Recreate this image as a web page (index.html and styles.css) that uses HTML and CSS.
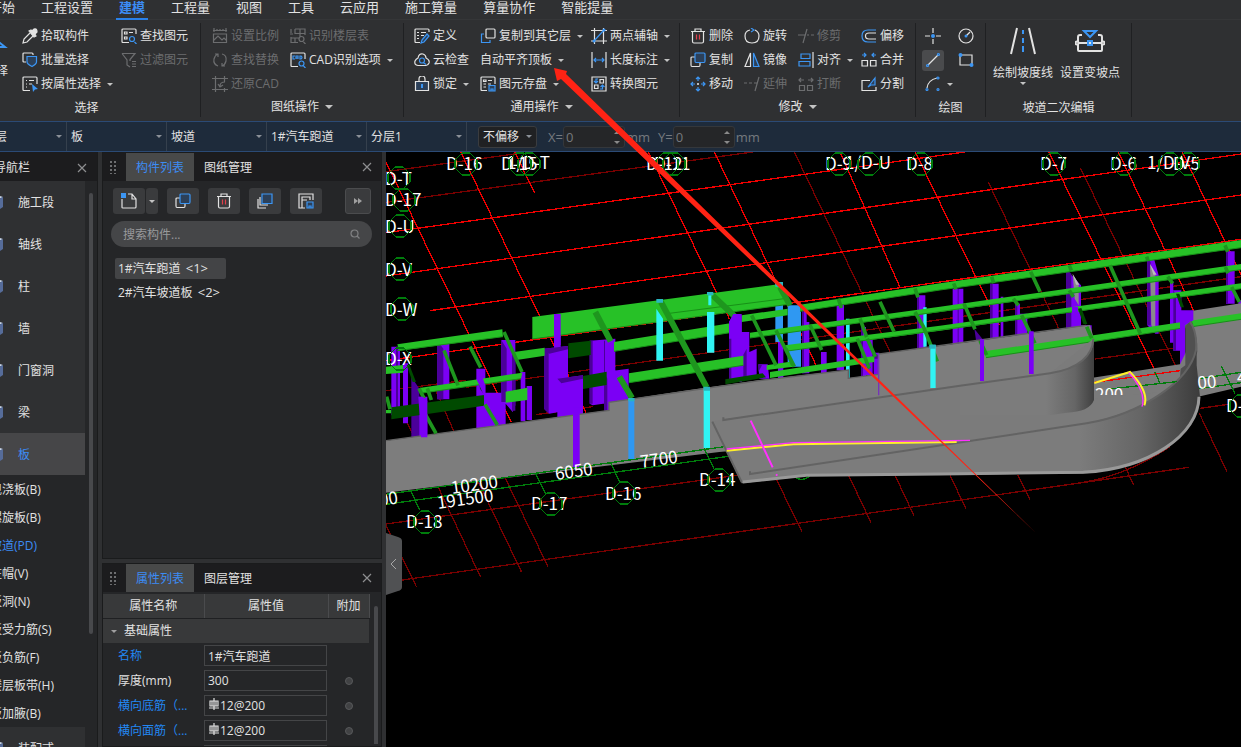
FILE: index.html
```
<!DOCTYPE html>
<html lang="zh-CN">
<head>
    <meta charset="UTF-8">
    <meta name="viewport" content="width=device-width, initial-scale=1.0">
    <title>建模</title>
    <link rel="stylesheet" href="styles.css">
</head>
<body>

<!-- icon set -->
<svg class="defs" aria-hidden="true">
    <symbol id="i-arrow" viewBox="0 0 16 16"><path class="b w" d="M-2 1L13 13H3L-1 16"/></symbol>
    <symbol id="i-pick" viewBox="0 0 16 16"><path d="M8 5L2 11L1 15L5 14L11 8"/><path class="f" d="M7 3L9 2L10 3L12 1Q15 0 15 4L13 6L14 8L12 9Z"/></symbol>
    <symbol id="i-batch" viewBox="0 0 16 16"><path d="M4 10H2Q1 10 1 9V2Q1 1 2 1H10Q11 1 11 2V3"/><path class="b t" d="M5 4.500H14.500V10Q14.500 12 10 14.500Q5 12 5 10Z"/></symbol>
    <symbol id="i-prop" viewBox="0 0 16 16"><path d="M8 14.500H2Q1 14.500 1 13.500V2Q1 1 2 1H14Q15 1 15 2V8M4 4.500H5M7 4.500H12M4 8H5M7 8H10M4 11H5"/><path class="bf" d="M10 8L16 13L13 13.500L11 16Z"/></symbol>
    <symbol id="i-find" viewBox="0 0 16 16"><path d="M8 14.500H2Q1 14.500 1 13.500V2Q1 1 2 1H14Q15 1 15 2V6M3.500 4H6V6H3.500ZM3.500 9H6V11H3.500ZM8 4.500H12"/><path class="b" d="M13.500 14L15.500 16M11 8.500A2.500 2.500 0 1 0 11 13.500A2.500 2.500 0 1 0 11 8.500"/></symbol>
    <symbol id="i-filter" viewBox="0 0 16 16"><path d="M1 1.500H14L9 7.500V9M1 1.500L6 8V13L9 15M11 9.500H15M11 12H15M11 14.500H15"/></symbol>
    <symbol id="i-scale" viewBox="0 0 16 16"><path d="M1 2.500H15M2 0V4M14 0V4M5 1V3M8 1V3M11 1V3M1.500 6H14.500V14.500H1.500ZM2 12L6 8L10 12L12 10L14 12"/></symbol>
    <symbol id="i-swap" viewBox="0 0 16 16"><path d="M6 14Q1 12 2 7Q3 3 6 2M3 2H6V5M10 2Q15 3 14 9Q13 13 10 14M13 14H10V11"/></symbol>
    <symbol id="i-restore" viewBox="0 0 16 16"><path d="M0 2.500H16M3.500 0V16M12.500 0V6M0 13.500H16M12.500 12V16M13 6Q8 6 8 10M6 8L8 11L11 9"/></symbol>
    <symbol id="i-floor" viewBox="0 0 16 16"><path d="M5 1H15V7M5 1V6M10 1V9M5 5.500H15M1 1V5M0 6H3M1 9V14.500H8M1 10H9M5 10V14M13.500 14L15.500 16M11.500 8.500A2.500 2.500 0 1 0 11.500 13.500A2.500 2.500 0 1 0 11.500 8.500"/></symbol>
    <symbol id="i-cad" viewBox="0 0 16 16"><path d="M8 14.500H2Q1 14.500 1 13.500V2Q1 1 2 1H14Q15 1 15 2V7"/><path class="b" d="M5 4H3V7H5M6 7V4H8V7M6 6H8M10 4V7H11Q13 5.500 11 4ZM13.500 14L15.500 16M11.500 9A2.500 2.500 0 1 0 11.500 14A2.500 2.500 0 1 0 11.500 9"/></symbol>
    <symbol id="i-define" viewBox="0 0 16 16"><path d="M6 14.500H2Q1 14.500 1 13.500V2Q1 1 2 1H14Q15 1 15 2V4M3 4.500H5M7 4.500H12M3 7.500H5M7 7.500H10M3 10.500H5"/><path class="b t" d="M8 12L13 6L15 8L10 14L7 15Z"/></symbol>
    <symbol id="i-cloud" viewBox="0 0 16 16"><path d="M4 13.500Q0 13 1 9Q2 7 4 6Q5 1 9 2Q12 3 12 6Q16 8 15 11Q14 13.500 12 13.500Z"/><path class="b" d="M10 11L12 12.500M8 6A2.500 2.500 0 1 0 8 11A2.500 2.500 0 1 0 8 6"/></symbol>
    <symbol id="i-lock" viewBox="0 0 16 16"><path class="t" d="M1.500 5.500H14.500V14.500H1.500Z"/><path d="M5 5V3Q5 0 8 0Q11 0 11 3V5"/><path class="b2" d="M8 8V12"/></symbol>
    <symbol id="i-copyto" viewBox="0 0 16 16"><path d="M6.500 1H14Q15 1 15 2V9Q15 10 14 10H7.500Q6 10 6 9V2Q6 1 7 1"/><path class="b" d="M4 6H1.500V14.500H10V12"/></symbol>
    <symbol id="i-save" viewBox="0 0 16 16"><path d="M7 14.500H2Q1 14.500 1 13.500V2Q1 1 2 1H14Q15 1 15 2V8M3.500 4H6V5.500H3.500ZM3.500 8H6M3.500 11H6M8 4.500H12M8 8H11"/><path class="b t" d="M9 9.500H15V15H9ZM11 15V13H13V15"/></symbol>
    <symbol id="i-axis" viewBox="0 0 16 16"><path d="M0 2.500H16M3.500 0V16M12.500 0V16M0 13H16"/><path class="b" d="M3 13L13 2"/><circle class="bf" cx="3" cy="13" r="1.500"/><circle class="bf" cx="13" cy="2" r="1.500"/></symbol>
    <symbol id="i-dim" viewBox="0 0 16 16"><path d="M1 0V16M15 0V16"/><path class="b" d="M3 8H13M5 6L3 8L5 10M11 6L13 8L11 10"/></symbol>
    <symbol id="i-convert" viewBox="0 0 16 16"><path d="M1 1H15V15H1ZM9 3.500H12.500V7H9ZM3.500 9H7V12.500H3.500Z"/><path class="b" d="M7 3H5V6M3 5L5 7L7 5M9 13H11.500V10M9.500 11L11.500 9L13.500 11"/></symbol>
    <symbol id="i-del" viewBox="0 0 16 16"><path d="M1 3.500H15M5 3V1H11V3M2.500 4V13.500Q2.500 15 4 15H12Q13.500 15 13.500 13.500V4"/><path class="r" d="M6.500 6.500V11.500M9.500 6.500V11.500"/></symbol>
    <symbol id="i-copy" viewBox="0 0 16 16"><path d="M5 5H2Q1 5 1 6V13Q1 14.500 2 14.500H9Q10 14.500 10 13V11"/><path class="b t" d="M6 1H14Q15 1 15 2V9Q15 10.500 14 10.500H6Q5 10.500 5 9V2Q5 1 6 1"/></symbol>
    <symbol id="i-move" viewBox="0 0 16 16"><path class="b" d="M8 5V1M6 3L8 1L10 3M8 11V15M6 13L8 15L10 13M5 8H1M3 6L1 8L3 10M11 8H15M13 6L15 8L13 10"/><path d="M7 8H9M8 7V9"/></symbol>
    <symbol id="i-rotate" viewBox="0 0 16 16"><path d="M6 2Q1 3 1 8Q1 15 8 15Q15 15 15 8Q15 4 11 2"/><path class="b" d="M7 0L10 2L7 4"/></symbol>
    <symbol id="i-mirror" viewBox="0 0 16 16"><path d="M6.500 1V14.500H1Z"/><path class="b t" d="M9.500 1V14.500H15Z"/></symbol>
    <symbol id="i-extend" viewBox="0 0 16 16"><path d="M0 7H3M5 7H8M10 7H13M15 1L11 15"/></symbol>
    <symbol id="i-trim" viewBox="0 0 16 16"><path d="M0 7H7M9 7H11M13 7H16M9 1L5 15"/></symbol>
    <symbol id="i-align" viewBox="0 0 16 16"><path class="b" d="M3 2H12V6.500H3ZM1 9.500H12V14H1Z"/><path d="M15 0V16"/></symbol>
    <symbol id="i-break" viewBox="0 0 16 16"><path d="M1.500 9.500H6.500V14.500H1.500ZM9.500 9.500H14.500V14.500H9.500ZM1 4H6M3 2L1 4L3 6M10 4H15M13 2L15 4L13 6"/></symbol>
    <symbol id="i-offset" viewBox="0 0 16 16"><path class="b" d="M15 2H7Q1 2 1 8Q1 14 7 14H15"/><path d="M15 5H8Q4.500 5 4.500 8Q4.500 11 8 11H15"/></symbol>
    <symbol id="i-merge" viewBox="0 0 16 16"><path d="M1 8.500H6.500V14H1ZM9.500 8.500H15V14H9.500Z"/><path class="b" d="M1 3H5M3 1L5 3L3 5M15 3H11M13 1L11 3L13 5"/></symbol>
    <symbol id="i-split" viewBox="0 0 16 16"><path d="M9 4.500H1V14.500H15V11"/><path class="b t" d="M7 11L14 2V9H10Z"/></symbol>
    <symbol id="i-point" viewBox="0 0 16 16"><path d="M8 0V5M8 11V16M0 8H5M11 8H16"/><circle class="bf" cx="8" cy="8" r="2"/></symbol>
    <symbol id="i-circle" viewBox="0 0 16 16"><circle cx="8" cy="8" r="7"/><path d="M8 8L12 4"/><circle class="bf" cx="8" cy="8" r="1.500"/></symbol>
    <symbol id="i-line" viewBox="0 0 16 16"><path d="M3 13L13 3"/><circle class="b" cx="2.500" cy="13.500" r="1"/><circle class="b" cx="13.500" cy="2.500" r="1"/></symbol>
    <symbol id="i-rect" viewBox="0 0 16 16"><path d="M2 3H14V13H2Z"/><circle class="bf" cx="2.500" cy="3" r="2"/><circle class="bf" cx="13.500" cy="13" r="2"/></symbol>
    <symbol id="i-arc" viewBox="0 0 16 16"><path d="M2 12Q3 4 12 2"/><circle class="b" cx="2" cy="13.500" r="1"/><circle class="b" cx="13" cy="2" r="1"/><circle class="b" cx="13" cy="13.500" r="1"/></symbol>
    <symbol id="i-slope" viewBox="0 0 30 30"><path class="w" d="M9 2L3 28M21 2L27 28"/><path class="w b" d="M15 4V8M15 12V17M15 20V26"/></symbol>
    <symbol id="i-vary" viewBox="0 0 30 30"><path class="w" d="M7 9H5Q3 9 3 11V24Q3 25 4 25H26Q27 25 27 24V11Q27 9 25 9H23M3 17H27"/><path class="w b" d="M9 5H21L15 11ZM13 15H17V19H13Z"/><circle class="w bg" cx="2" cy="17" r="1.500"/><circle class="w bg" cx="28" cy="17" r="1.500"/></symbol>
    <symbol id="i-new" viewBox="0 0 16 16"><path d="M1 6V14.500Q1 15 2 15H14Q15 15 15 14V6L11 1H7M11 1V6H15"/><path class="bf" d="M0 0H5V5H0Z"/></symbol>
    <symbol id="i-stack" viewBox="0 0 16 16"><path d="M3 4V12H11M1 6V15H9"/><path class="b t" d="M5 1H15V10.500H5Z"/></symbol>
    <symbol id="i-form" viewBox="0 0 16 16"><path d="M7 15H1V1H15V7M4 15V4H12V7M4 7H9"/><path class="b t" d="M9 9H15V15H9ZM11 15V13H13V15"/></symbol>
    <symbol id="i-close" viewBox="0 0 10 10"><path d="M1 1L9 9M9 1L1 9"/></symbol>
    <symbol id="i-search" viewBox="0 0 10 10"><circle cx="4.500" cy="4.500" r="3.500"/><path d="M7 7L9.500 9.500"/></symbol>
    <symbol id="i-rebar" viewBox="0 0 10 12"><path d="M5 0V12M1 3H9V8H1ZM3 3V8M7 3V8M0 10H10"/></symbol>
    <symbol id="i-cube" viewBox="0 0 20 20"><path class="c1" d="M2 5L10 1L19 4L11 8Z"/><path class="c2" d="M2 5L11 8V19L2 15Z"/><path class="c3" d="M11 8L19 4V14L11 19Z"/></symbol>
    <symbol id="oct" viewBox="0 0 24 24"><path d="M8 1H16L23 8V16L16 23H8L1 16V8Z"/></symbol>
</svg>

<div class="app">
    <nav class="menu">
        <a href="#">开始</a>
        <a href="#">工程设置</a>
        <a href="#" class="active">建模</a>
        <a href="#">工程量</a>
        <a href="#">视图</a>
        <a href="#">工具</a>
        <a href="#">云应用</a>
        <a href="#">施工算量</a>
        <a href="#">算量协作</a>
        <a href="#">智能提量</a>
    </nav>

    <div class="ribbon">
        <section class="group g-select">
            <div class="tools">
                <button class="pointer"><svg class="ico"><use href="#i-arrow"/></svg><span>选择</span></button>
                <button><svg class="ico"><use href="#i-pick"/></svg>拾取构件</button>
                <button><svg class="ico"><use href="#i-batch"/></svg>批量选择</button>
                <button class="drop"><svg class="ico"><use href="#i-prop"/></svg>按属性选择</button>
                <button><svg class="ico"><use href="#i-find"/></svg>查找图元</button>
                <button disabled><svg class="ico"><use href="#i-filter"/></svg>过滤图元</button>
            </div>
            <div class="caption">选择</div>
        </section>

        <section class="group g-drawing">
            <div class="tools">
                <button disabled><svg class="ico"><use href="#i-scale"/></svg>设置比例</button>
                <button disabled><svg class="ico"><use href="#i-swap"/></svg>查找替换</button>
                <button disabled><svg class="ico"><use href="#i-restore"/></svg>还原CAD</button>
                <button disabled><svg class="ico"><use href="#i-floor"/></svg>识别楼层表</button>
                <button class="drop"><svg class="ico"><use href="#i-cad"/></svg>CAD识别选项</button>
            </div>
            <div class="caption more">图纸操作</div>
        </section>

        <section class="group g-common">
            <div class="tools">
                <button><svg class="ico"><use href="#i-define"/></svg>定义</button>
                <button><svg class="ico"><use href="#i-cloud"/></svg>云检查</button>
                <button class="drop"><svg class="ico"><use href="#i-lock"/></svg>锁定</button>
                <button class="drop"><svg class="ico"><use href="#i-copyto"/></svg>复制到其它层</button>
                <button class="drop">自动平齐顶板</button>
                <button class="drop"><svg class="ico"><use href="#i-save"/></svg>图元存盘</button>
                <button class="drop"><svg class="ico"><use href="#i-axis"/></svg>两点辅轴</button>
                <button class="drop"><svg class="ico"><use href="#i-dim"/></svg>长度标注</button>
                <button><svg class="ico"><use href="#i-convert"/></svg>转换图元</button>
            </div>
            <div class="caption more">通用操作</div>
        </section>

        <section class="group g-modify">
            <div class="tools">
                <button><svg class="ico"><use href="#i-del"/></svg>删除</button>
                <button><svg class="ico"><use href="#i-copy"/></svg>复制</button>
                <button><svg class="ico"><use href="#i-move"/></svg>移动</button>
                <button><svg class="ico"><use href="#i-rotate"/></svg>旋转</button>
                <button><svg class="ico"><use href="#i-mirror"/></svg>镜像</button>
                <button disabled><svg class="ico"><use href="#i-extend"/></svg>延伸</button>
                <button disabled><svg class="ico"><use href="#i-trim"/></svg>修剪</button>
                <button class="drop"><svg class="ico"><use href="#i-align"/></svg>对齐</button>
                <button disabled><svg class="ico"><use href="#i-break"/></svg>打断</button>
                <button><svg class="ico"><use href="#i-offset"/></svg>偏移</button>
                <button><svg class="ico"><use href="#i-merge"/></svg>合并</button>
                <button><svg class="ico"><use href="#i-split"/></svg>分割</button>
            </div>
            <div class="caption more">修改</div>
        </section>

        <section class="group g-draw">
            <div class="tools">
                <button aria-label="点"><svg class="ico"><use href="#i-point"/></svg></button>
                <button aria-label="直线" class="on"><svg class="ico"><use href="#i-line"/></svg></button>
                <button aria-label="弧" class="drop"><svg class="ico"><use href="#i-arc"/></svg></button>
                <button aria-label="圆"><svg class="ico"><use href="#i-circle"/></svg></button>
                <button aria-label="矩形"><svg class="ico"><use href="#i-rect"/></svg></button>
            </div>
            <div class="caption">绘图</div>
        </section>

        <section class="group g-ramp">
            <div class="big-tools">
                <button class="big drop"><svg><use href="#i-slope"/></svg><span>绘制坡度线</span></button>
                <button class="big"><svg><use href="#i-vary"/></svg><span>设置变坡点</span></button>
            </div>
            <div class="caption">坡道二次编辑</div>
        </section>
    </div>

    <div class="options">
        <div class="pick"><select aria-label="楼层"><option>第一层</option></select></div>
        <div class="pick"><select aria-label="类型"><option>板</option></select></div>
        <div class="pick"><select aria-label="子类型"><option>坡道</option></select></div>
        <div class="pick"><select aria-label="构件"><option>1#汽车跑道</option></select></div>
        <div class="pick"><select aria-label="分层"><option>分层1</option></select></div>
        <div class="pick shift"><select aria-label="偏移"><option>不偏移</option></select></div>
        <label for="offX">X=</label><div class="spin"><input id="offX" type="text" value="0" disabled></div><span class="unit">mm</span>
        <label for="offY">Y=</label><div class="spin"><input id="offY" type="text" value="0" disabled></div><span class="unit">mm</span>
    </div>

    <div class="work">
        <aside class="nav">
            <div class="nav-head">导航栏<button class="close" aria-label="关闭"><svg><use href="#i-close"/></svg></button></div>
            <div class="nav-body">
                <ul class="nav-list">
                    <li class="item"><svg><use href="#i-cube"/></svg>施工段</li>
                    <li class="item"><svg><use href="#i-cube"/></svg>轴线</li>
                    <li class="item"><svg><use href="#i-cube"/></svg>柱</li>
                    <li class="item"><svg><use href="#i-cube"/></svg>墙</li>
                    <li class="item"><svg><use href="#i-cube"/></svg>门窗洞</li>
                    <li class="item"><svg><use href="#i-cube"/></svg>梁</li>
                    <li class="item current"><svg><use href="#i-cube"/></svg>板</li>
                    <li class="sub">现浇板(B)</li>
                    <li class="sub">螺旋板(B)</li>
                    <li class="sub current">坡道(PD)</li>
                    <li class="sub">柱帽(V)</li>
                    <li class="sub">板洞(N)</li>
                    <li class="sub">板受力筋(S)</li>
                    <li class="sub">板负筋(F)</li>
                    <li class="sub">楼层板带(H)</li>
                    <li class="sub">板加腋(B)</li>
                    <li class="item"><svg><use href="#i-cube"/></svg>装配式</li>
                </ul>
                <div class="scroll"><div class="thumb"></div></div>
            </div>
        </aside>

        <div class="dock">
            <section class="panel components">
                <div class="tabs">
                    <span class="grip"></span>
                    <button class="tab active">构件列表</button>
                    <button class="tab">图纸管理</button>
                    <button class="close" aria-label="关闭"><svg><use href="#i-close"/></svg></button>
                </div>
                <div class="bar">
                    <div class="split">
                        <button aria-label="新建"><svg class="ico"><use href="#i-new"/></svg></button>
                        <button aria-label="更多" class="drop"></button>
                    </div>
                    <button aria-label="复制"><svg class="ico"><use href="#i-copy"/></svg></button>
                    <button aria-label="删除"><svg class="ico"><use href="#i-del"/></svg></button>
                    <button aria-label="层间复制"><svg class="ico"><use href="#i-stack"/></svg></button>
                    <button aria-label="构件存盘"><svg class="ico"><use href="#i-form"/></svg></button>
                    <button aria-label="展开" class="next"><i></i><i></i></button>
                </div>
                <div class="search">
                    <input type="text" placeholder="搜索构件..." aria-label="搜索构件">
                    <svg><use href="#i-search"/></svg>
                </div>
                <ul class="list">
                    <li class="selected">1#汽车跑道 <span>&lt;1&gt;</span></li>
                    <li>2#汽车坡道板 <span>&lt;2&gt;</span></li>
                </ul>
            </section>

            <section class="panel props">
                <div class="tabs">
                    <span class="grip"></span>
                    <button class="tab active">属性列表</button>
                    <button class="tab">图层管理</button>
                    <button class="close" aria-label="关闭"><svg><use href="#i-close"/></svg></button>
                </div>
                <div class="props-body">
                    <table>
                        <thead>
                            <tr><th class="c-name">属性名称</th><th class="c-value">属性值</th><th class="c-add">附加</th></tr>
                        </thead>
                        <tbody>
                            <tr class="section"><td colspan="3">基础属性</td></tr>
                            <tr>
                                <td class="name key"><label for="p1">名称</label></td>
                                <td><div class="val"><input id="p1" type="text" value="1#汽车跑道"></div></td>
                                <td></td>
                            </tr>
                            <tr>
                                <td class="name"><label for="p2">厚度(mm)</label></td>
                                <td><div class="val"><input id="p2" type="text" value="300"></div></td>
                                <td><input type="radio" aria-label="附加厚度"></td>
                            </tr>
                            <tr>
                                <td class="name key"><label for="p3">横向底筋（...</label></td>
                                <td><div class="val"><svg><use href="#i-rebar"/></svg><input id="p3" type="text" value="12@200"></div></td>
                                <td><input type="radio" aria-label="附加横向底筋"></td>
                            </tr>
                            <tr>
                                <td class="name key"><label for="p4">横向面筋（...</label></td>
                                <td><div class="val"><svg><use href="#i-rebar"/></svg><input id="p4" type="text" value="12@200"></div></td>
                                <td><input type="radio" aria-label="附加横向面筋"></td>
                            </tr>
                            <tr>
                                <td class="name key"></td>
                                <td><div class="val"><input type="text" aria-label="纵向底筋"></div></td>
                                <td></td>
                            </tr>
                        </tbody>
                    </table>
                    <div class="scroll"><div class="thumb"></div></div>
                </div>
            </section>
        </div>

        <main class="view">
            <svg class="scene" viewBox="0 0 855 595" preserveAspectRatio="xMinYMin slice">
                <defs>
                    <linearGradient id="outer" gradientUnits="userSpaceOnUse" x1="2080" y1="0" x2="2440" y2="0">
                        <stop offset="0" stop-color="#7c7c7c"/><stop offset=".5" stop-color="#666"/><stop offset="1" stop-color="#3c3c3c"/>
                    </linearGradient>
                    <linearGradient id="inner" gradientUnits="userSpaceOnUse" x1="1980" y1="0" x2="2124" y2="0">
                        <stop offset="0" stop-color="#7c7c7c"/><stop offset=".6" stop-color="#666"/><stop offset="1" stop-color="#404040"/>
                    </linearGradient>
                    <clipPath id="cut"><path d="M700 220H760V243H700Z"/></clipPath>
                </defs>
                <svg width="855" height="595" viewBox="0 0 2565 1785">
                    <!-- axis grid -->
                    <path class="axis dim" d="M0 59L400 4M0 151L1100 0M239 706L2565 374M449 788L620 764M0 716L239 685M2127 621L2382 586
                        M0 1116L1067 968M49 1284L2409 946M2442 769L2527 757M2092 991Q2222 970 2352 884
                        M1225 0L1512 599M1807 91L2017 527M2084 49L2385 674M64 814L80 845M149 714L204 839
                        M0 1119L91 1304M157 1006L284 1276M277 989L406 1259M357 977L486 1244M1172 984L1248 1139M1389 972L1455 1112
                        M1527 970L1584 1091M1692 970L1740 1070M1895 968L1932 1042M2215 940L2243 998M2440 784L2523 959"/>
                    <path class="axis" d="M0 242L1736 0M0 372L2565 6M132 476L2565 129M0 626L2565 262
                        M0 30L376 811M224 0L600 781M386 0L446 122M787 0L1030 500M985 0L1297 654M1362 0L1542 406M1588 0L1840 520
                        M1989 0L2312 666M2197 0L2427 484M2389 0L2565 369"/>

                    <!-- rear columns -->
                    <path class="col" d="M16 584H42V790H16ZM51 634H66V814H51ZM99 734H124V856H99ZM154 566H190V742H154ZM271 650H298V830H271Z
                        M294 722H359V830H294ZM346 564H388V760L380 780L346 740ZM404 660H418V808H404ZM422 702H438V804H422ZM504 486H524V600H504Z
                        M474 590L546 582V775L490 785L474 770ZM514 680L591 670V800H514ZM611 566L688 560V750L620 760L611 755ZM654 660L728 650V775H654Z
                        M1029 510L1042 490H1067V690H1029ZM1067 540H1090V680H1067ZM1072 608L1112 590V680H1072ZM1117 637H1145L1150 680H1120Z
                        M1176 570H1192V680H1176ZM1248 470H1262V664H1248ZM1255 510H1270V664H1255ZM1305 600H1322V664H1305ZM1352 455H1374V655H1352Z
                        M1426 525H1440V680H1426ZM1440 555H1460V670H1440ZM1463 602H1480V690H1463ZM1594 430H1618V592H1594ZM1700 410H1732V580H1700Z
                        M1812 395H1838V565H1812ZM1844 434H1852V560H1844ZM1888 455H1902V560H1888ZM1900 485H1924V560H1900ZM2040 352L2085 400V530H2040Z
                        M2079 520H2117V625H2079ZM2284 320H2304L2318 370V545H2308L2284 520ZM2352 390H2362V572H2352ZM2362 415H2386V596H2362Z
                        M2520 298H2546V455H2520ZM2557 445H2565V634H2557Z"/>
                    <path class="col shade" d="M30 584H36V790H30ZM76 674L100 710V856H76ZM154 566L172 590V742H154ZM346 564L362 590V750H346Z
                        M378 600L388 620V776H378ZM474 590H488V785L474 770ZM474 590L546 582V592L490 605ZM611 566H620V755H611ZM654 566H657V750H654ZM514 680L591 670V680L526 694ZM654 660L664 680V775H654Z
                        M1029 510H1036V690H1029ZM1072 608L1082 590V680H1072ZM1117 637V660L1128 640ZM1248 470H1254V664H1248ZM1426 525H1431V680H1426ZM1463 602L1477 610V620H1463Z
                        M1594 430H1599V592H1594ZM1715 410H1718V580H1715ZM1812 395H1820V565H1812ZM1888 455H1894V560H1888ZM2040 352L2056 365V530H2040Z
                        M2284 320L2294 330V520H2284ZM2362 415L2370 430V596H2362ZM2520 298H2526V455H2520ZM1765 530L1790 562L1770 564Z"/>
                    <path class="stone" d="M2060 366L2078 396V460L2066 440ZM2292 336L2308 365V540L2296 520Z"/>
                    <path class="stone-light" d="M2060 366L2080 398H2070ZM2292 336L2312 368H2302Z"/>
                    <path class="sky" d="M1168 390H1191V570H1168ZM1205 460H1245V644H1205Z"/>
                    <path class="cyan" d="M1380 500H1391V679H1380ZM1612 466H1622V584H1612Z"/>

                    <!-- side wall -->
                    <path class="wall" d="M0 866L669 775V751L894 716L1122 684L1387 654V679L1477 667V606L1722 574L2112 519L2124 560V800L1000 900L0 1022Z"/>
                    <path class="wall" d="M2410 478L2565 454V704L2430 736Z"/>
                    <path class="wall-edge" d="M0 866L669 775V751L1122 686L1387 654V679L1477 667V606L2100 520"/>
                    <path class="post-thin" d="M1478 606V730"/>

                    <!-- beams -->
                    <path class="beam" d="M34 577L349 532L351 554L39 596ZM0 644L51 639V662L0 666ZM100 708L409 662L405 680L104 724ZM384 600L476 587V611L392 624Z
                        M439 495L1177 397L1207 457L439 561ZM684 570L1032 514V542L684 598ZM729 664L1072 611V640L729 692ZM359 719L424 707V744L359 752ZM0 774H16V784H0Z
                        M1067 490L1205 470V490L1067 510ZM1242 458L1662 394L2565 264V287L1662 414L1242 478ZM1092 542L1662 464L2565 336V353L1662 480L1092 558Z
                        M1197 580L1662 521L2565 394V410L1662 536L1197 598ZM1152 660L1465 612V630L1152 678ZM1142 640L1222 628V644L1142 654ZM1795 598L2565 484V502L1800 617Z"/>
                    <path class="beam-line" d="M850 484L1195 440M34 596L351 554M104 724L405 680M439 561L1207 457M684 598L1032 542M729 692L1072 640M1242 478L1662 414L2565 287M1092 558L2565 353M1197 598L2565 410M1800 617L2565 502"/>
                    <path class="beam-deep" d="M547 574L614 566V609L547 619ZM591 672L662 659V699L591 711ZM16 766L294 729V761L16 802ZM1018 682L1130 664L1140 676L1018 697Z
                        M62 640L70 638L90 690L80 690ZM280 690L296 720V730L282 710ZM2076 470L2086 468L2104 516L2092 516ZM2370 425L2380 425L2394 466L2384 466Z"/>
                    <path class="brace" d="M354 540L408 660M174 595L216 700M252 584L284 646M114 780L150 844M297 757L334 819M2 734L12 772M99 709L114 739M124 709L136 744
                        M1097 490L1170 640M1170 535L1225 644M1200 590L1220 640M1272 519L1307 594M1357 440L1366 468M1482 449L1524 539M1422 500L1442 555M1414 560L1450 650M1444 560L1468 614M1587 409L1596 436M1587 480L1612 524L1654 628
                        M1703 394L1710 412M1817 374L1823 394M1934 359L1962 419M2050 340L2056 356M2172 340L2263 545M1734 455L1767 532M1782 566L1802 609M1907 490L1947 574M1882 440L1897 460M2102 524L2117 559
                        M2050 415L2062 435M2282 314L2286 326M2345 374L2360 394M2397 480L2417 519M2517 280L2525 299M2518 345L2526 364M2537 405L2560 450"/>
                    <path class="brace wide" d="M628 480L674 568M825 450L962 706M980 430L1045 492M1182 405L1212 460M700 674L738 738"/>

                    <!-- front columns -->
                    <path class="col" d="M504 486H524V580H504ZM97 734H110L124 746V856H105ZM271 682L290 678L298 700V740L280 700ZM561 766H581V946H561ZM1029 510L1042 486H1067V560H1029ZM1782 562H1794V687H1782ZM1929 538H1943V666H1929ZM2058 465H2076V520H2058ZM2382 475H2422V505L2398 520V656H2382Z"/>
                    <path class="sky" d="M727 738H745V921H727Z"/>
                    <path class="cyan" d="M811 470L831 500V626H811ZM963 480H985V602H963ZM967 430H976V460H967ZM953 706H972V888H953ZM1633 578H1649V708H1633Z"/>
                    <path class="teal" d="M811 441H831V452H811ZM963 420H982V430H963ZM953 704H972V716H953ZM1630 578H1649V590H1630ZM1168 390H1191V404H1168ZM727 738H745V748H727Z"/>

                    <!-- green dimension lines -->
                    <path class="dimline" d="M0 1027L1022 883M0 1057L1027 913M74 1016L101 1074M449 964L479 1026M674 932L702 992M954 890L984 951M2440 680L2565 661M2440 710L2565 692M2506 641L2547 726"/>
                    <circle class="dimline" cx="1246" cy="948" r="34"/>

                    <!-- ramp -->
                    <path class="deck" d="M2100 680L2382 637L2400 600L2440 700L2300 850L2000 850Z"/>
                    <path class="under" d="M2412 509Q2436 545 2434 600L2380 710L2384 650L2398 640V522Z"/>
                    <path class="deck" d="M979 809L1067 994L1262 972L2092 964L2330 720L2124 740L2122 560L1992 664L1012 802Z"/>
                    <path fill="url(#inner)" d="M1722 699L1992 664C2080 650 2122 610 2124 560V744Q2110 780 2042 782L1990 790L1722 790Z"/>
                    <path fill="url(#outer)" d="M1092 964L2102 812C2260 786 2410 690 2432 594V640L2442 734C2442 850 2300 950 2092 964L1262 972Z"/>
                    <path class="rim" d="M1070 990L1262 970L1662 966L2092 961C2290 950 2437 850 2439 734"/>
                    <path class="edge" d="M979 809L1067 990M1012 796V804L1722 701L1992 664C2080 650 2120 610 2122 560M1092 958V966L2102 814C2260 788 2410 690 2430 594Q2434 540 2412 509"/>
                    <path class="axis" d="M2125 691L2382 656"/>
                    <path class="dimline" d="M2162 712L2372 689M2307 660L2322 694"/>
                    <path class="yellow" d="M1022 896L1222 877L1712 870M2125 693L2232 660Q2290 720 2275 760"/>
                    <path class="pink" d="M1022 891L1222 872L1752 865M2228 662Q2282 720 2268 764"/>
                    <path class="pink thick" d="M1094 806L1160 946M1170 967L1174 971"/>
                </svg>

                <g class="labels">
                    <text x="60" y="18">D-16</text><text x="115" y="18">D-15</text><text x="121" y="17">1/D-T</text>
                    <text x="260" y="18">D-12</text><text x="268" y="18">D-11</text><text x="439" y="18">D-9</text>
                    <text x="459" y="17">1/D-U</text><text x="520" y="18">D-8</text><text x="654" y="18">D-7</text>
                    <text x="724" y="18">D-6</text><text x="761" y="17">1/D-V</text><text x="787" y="18">D-5</text>
                    <text x="-1" y="33">D-T</text><text x="-1" y="54">D-17</text><text x="-1" y="81">D-U</text>
                    <text x="-1" y="124">D-V</text><text x="-1" y="164">D-W</text><text x="-1" y="213">D-X</text>
                    <text x="20" y="376">D-18</text><text x="145" y="358">D-17</text><text x="219" y="348">D-16</text>
                    <text x="313" y="334">D-14</text><text x="840" y="260">D-5</text>
                    <text transform="rotate(-8 66 342)" x="66" y="342">10200</text>
                    <text transform="rotate(-8 52 357)" x="52" y="357">191500</text>
                    <text transform="rotate(-8 170 328)" x="170" y="328">6050</text>
                    <text transform="rotate(-8 255 316)" x="255" y="316">7700</text>
                    <text transform="rotate(-8 -6 354)" x="-6" y="354">00</text>
                    <text transform="rotate(-5 813 237)" x="812" y="237">00</text>
                    <text x="851" y="232">4</text>
                    <g clip-path="url(#cut)"><text x="709" y="249">200</text></g>
                </g>
                <!-- axis bubbles -->
                <g class="bubbles">
                    <use href="#oct" x="1" y="14" width="24" height="24"/><use href="#oct" x="6" y="36" width="24" height="24"/>
                    <use href="#oct" x="2" y="62" width="24" height="24"/><use href="#oct" x="2" y="105" width="24" height="24"/>
                    <use href="#oct" x="4" y="145" width="24" height="24"/><use href="#oct" x="2" y="195" width="24" height="24"/>
                    <use href="#oct" x="68" y="0" width="24" height="24"/><use href="#oct" x="122" y="0" width="24" height="24"/>
                    <use href="#oct" x="131" y="0" width="24" height="24"/><use href="#oct" x="269" y="0" width="24" height="24"/>
                    <use href="#oct" x="276" y="0" width="24" height="24"/><use href="#oct" x="441" y="0" width="24" height="24"/>
                    <use href="#oct" x="471" y="0" width="24" height="24"/><use href="#oct" x="523" y="0" width="24" height="24"/>
                    <use href="#oct" x="656" y="0" width="24" height="24"/><use href="#oct" x="726" y="0" width="24" height="24"/>
                    <use href="#oct" x="772" y="0" width="24" height="24"/><use href="#oct" x="790" y="0" width="24" height="24"/>
                    <use href="#oct" x="27" y="358" width="24" height="24"/><use href="#oct" x="153" y="340" width="24" height="24"/>
                    <use href="#oct" x="226" y="329" width="24" height="24"/><use href="#oct" x="321" y="316" width="24" height="24"/>
                    <use href="#oct" x="843" y="242" width="24" height="24"/>
                </g>
            </svg>
            <button class="fold" aria-label="收起">
                <svg viewBox="0 0 16 62"><path class="face" d="M0 0L12 4Q16 5 16 8V54Q16 57 12 58L0 62Z"/><path class="chev" d="M10 26L5 31L10 36"/></svg>
            </button>
        </main>
    </div>
</div>

<!-- pointer arrow drawn over the window -->
<svg class="mark" viewBox="0 0 1241 747" aria-hidden="true"><path d="M554 68L567 71L566 74L1036 533L561 79L557 81Z"/></svg>

</body>
</html>
```

FILE: styles.css
```
* {
    box-sizing: border-box;
}

body {
    margin: 0;
    overflow: hidden;
    background: #2f3032;
    color: #e2e2e2;
    font: 12px/18px "Open Sans", "Noto Sans CJK SC", sans-serif;
}

button, input, select {
    margin: 0;
    padding: 0;
    border: 0;
    background: none;
    color: inherit;
    font: inherit;
    appearance: none;
}

ul {
    margin: 0;
    padding: 0;
    list-style: none;
}

.defs {
    position: absolute;
    width: 0;
    height: 0;
}

/* the window hangs over the left screen edge */
.app {
    display: flex;
    flex-direction: column;
    height: 100vh;
    margin-left: -33px;
}

/* icons */
symbol path, symbol circle {
    fill: none;
    stroke: currentColor;
    stroke-width: 1.2;
}

symbol .b { stroke: #3c96f4; }
symbol .b2 { stroke: #3c96f4; stroke-width: 2; }
symbol .r { stroke: #e0404c; }
symbol .f { fill: currentColor; }
symbol .bf { fill: #3c96f4; stroke: none; }
symbol .t { fill: #2c4059; }
symbol .w { stroke-width: 2; }
symbol .bg { fill: #2f3032; }
symbol .c1 { fill: #c8d4e8; stroke: none; }
symbol .c2 { fill: #7d92bb; stroke: none; }
symbol .c3 { fill: #566c9a; stroke: none; }

.ico {
    flex: none;
    width: 16px;
    height: 16px;
}

/* menu */
.menu {
    display: flex;
    gap: 20px;
    height: 20px;
    padding-left: 19px;
    border-bottom: 1px solid #353638;
}

.menu a {
    height: 20px;
    padding: 0 3px;
    color: #e2e2e2;
    font-size: 13px;
    line-height: 15px;
    text-decoration: none;
    white-space: nowrap;
}

.menu .active {
    color: #3c8cf5;
    font-weight: bold;
    border-bottom: 2px solid #2a80e8;
}

/* ribbon */
.ribbon {
    display: flex;
    height: 101px;
    padding: 3px 0 4px;
}

.group {
    flex: none;
    border-right: 1px solid #1f2022;
}

.tools {
    display: grid;
    grid-template-rows: repeat(3, 24px);
    grid-auto-flow: column;
    padding-top: 1px;
}

.tools button {
    display: flex;
    align-items: center;
    gap: 3px;
    white-space: nowrap;
}

.tools button:disabled {
    color: #6c6d6f;
}

.tools .pointer {
    grid-row: 1 / 4;
    flex-direction: column;
    align-items: flex-start;
    gap: 12px;
    padding: 10px 0 0 17px;
}

.pointer .ico {
    margin-left: 8px;
}

.drop::after, .more::after, .pick::after {
    content: "";
    border: 3px solid transparent;
    border-top-color: #c4c4c4;
    border-bottom: 0;
}

.tools .drop::after {
    margin-left: 3px;
}

.caption {
    display: flex;
    justify-content: center;
    align-items: center;
    gap: 6px;
    height: 21px;
}

.more::after {
    border-width: 4px 4px 0;
}

.g-select { width: 234px; }
.g-select .tools { grid-template-columns: 55px 99px 79px; }
.g-select .caption { padding-left: 6px; }
.g-drawing { width: 203px; }
.g-drawing .tools { grid-template-columns: 78px 110px; padding-left: 11px; }
.g-common { width: 276px; }
.g-common .tools { grid-template-columns: 66px 111px 88px; padding-left: 10px; }
.g-modify { width: 236px; }
.g-modify .tools { grid-template-columns: 54px 54px 63px 54px; padding-left: 10px; }
.g-draw { width: 70px; }
.g-draw .tools { grid-template-columns: 33px 33px; padding-left: 6px; }
.g-ramp { width: 146px; }

.g-select .caption, .g-draw .caption, .g-ramp .caption {
    height: 24px;
}

.g-draw button {
    align-self: center;
    padding: 0 3px;
}

.g-draw .on {
    width: 22px;
    height: 21px;
    border-radius: 3px;
    background: #4a4b4d;
}

.big-tools {
    display: flex;
    gap: 7px;
    height: 73px;
    padding: 3px 7px 0;
}

.big {
    display: flex;
    flex-direction: column;
    align-items: center;
    width: 60px;
    white-space: nowrap;
}

.big svg {
    flex: none;
    width: 30px;
    height: 30px;
    margin-bottom: 8px;
}

/* options bar */
.options {
    display: flex;
    align-items: center;
    flex: none;
    height: 31px;
    border-top: 1px solid #2b4a75;
    border-bottom: 1px solid #2b4a75;
    background: #1e2b3b;
    color: #75797e;
}

.options label, .unit {
    font-size: 13px;
}

.pick {
    display: flex;
    align-items: center;
    width: 100px;
    height: 29px;
    padding: 0 4px;
    border-right: 1px solid #35404d;
    color: #e2e2e2;
}

.pick select {
    flex: 1;
    min-width: 0;
}

.pick::after {
    border-top-color: #8c9299;
}

.shift {
    width: 59px;
    height: 22px;
    margin: 0 11px;
    border: 1px solid #3a3c3f;
    border-radius: 3px;
    background: #202123;
}

.spin {
    position: relative;
    width: 62px;
    height: 22px;
    margin-right: 1px;
    border: 1px solid #34373b;
    border-radius: 3px;
    background: #252628;
}

.spin input {
    width: 44px;
    height: 20px;
    padding-left: 2px;
    font-size: 13px;
}

/* spinner arrows */
.spin::before, .spin::after {
    content: "";
    position: absolute;
    right: 4px;
    border: 3px solid transparent;
}

.spin::before {
    top: 4px;
    border-top: 0;
    border-bottom-color: #8a8a8a;
}

.spin::after {
    bottom: 3px;
    border-bottom: 0;
    border-top-color: #8a8a8a;
}

.unit {
    margin-right: 8px;
}

/* work area */
.work {
    display: flex;
    flex: 1;
    min-height: 0;
}

.close {
    display: flex;
    margin-left: auto;
    color: #8d8e90;
}

.close svg {
    width: 10px;
    height: 10px;
}

/* navigation */
.nav {
    display: flex;
    flex-direction: column;
    width: 131px;
    border-right: 1px solid #1a1b1c;
    background: #252628;
}

.nav-head {
    display: flex;
    align-items: center;
    flex: none;
    height: 29px;
    padding: 2px 10px 0 27px;
    background: #1c1c1e;
}

.nav-body {
    display: flex;
    flex: 1;
    min-height: 0;
}

.nav-list {
    flex: 1;
    overflow: hidden;
}

.item {
    display: flex;
    align-items: center;
    gap: 14px;
    height: 42px;
    padding: 2px 0 0 17px;
    background: #2f3032;
}

.item svg {
    width: 20px;
    height: 20px;
}

.item.current {
    background: #464648;
    color: #3c8cf5;
}

.sub {
    height: 28px;
    padding-left: 23px;
    line-height: 30px;
}

.sub.current {
    color: #3c8cf5;
}

.nav .scroll {
    width: 12px;
    padding: 12px 4px;
}

.thumb {
    width: 4px;
    height: 441px;
    border-radius: 2px;
    background: #48494c;
}

/* docked panels */
.dock {
    display: flex;
    flex-direction: column;
    gap: 4px;
    width: 288px;
    padding: 0 4px;
    background: #2f3032;
}

.panel {
    border: 1px solid #1a1b1c;
    background: #252628;
    overflow: hidden;
}

.components { flex: 1; }
.props { height: 184px; }

.tabs {
    display: flex;
    align-items: center;
    height: 28px;
    padding-right: 9px;
    background: #1c1c1e;
}

.grip {
    width: 7px;
    height: 14px;
    margin: 0 10px 0 6px;
    background: radial-gradient(circle, #6d6e70 1px, transparent 1px) 0 0 / 4px 4px;
}

.tab {
    height: 28px;
    padding: 2px 10px 0;
}

.tab.active {
    background: #484949;
    color: #3c8cf5;
}

.bar {
    display: flex;
    gap: 9px;
    padding: 7px 10px;
}

.bar button {
    display: flex;
    justify-content: center;
    align-items: center;
    width: 32px;
    height: 26px;
    border-radius: 3px;
    background: #3a3b3d;
}

.split {
    display: flex;
    gap: 1px;
}

.bar .split .drop {
    width: 12px;
}

.bar .next {
    width: 26px;
    margin-left: auto;
    border: 1px solid #4b4c4e;
}

.next i {
    border: 3px solid transparent;
    border-left: 4px solid #a0a0a0;
    border-right: 0;
}

.search {
    display: flex;
    align-items: center;
    height: 26px;
    margin: 0 9px 0 8px;
    padding: 0 12px;
    border-radius: 13px;
    background: #454648;
}

.search input {
    flex: 1;
    min-width: 0;
    padding-top: 2px;
}

.search input::placeholder {
    color: #98999b;
}

.search svg {
    width: 10px;
    height: 10px;
    color: #808183;
}

.list {
    padding: 11px 12px;
}

.list li {
    width: 111px;
    height: 21px;
    margin-bottom: 3px;
    padding-left: 3px;
    border-radius: 2px;
    line-height: 21px;
    white-space: nowrap;
}

.list span {
    margin-left: 2px;
    font-size: 13px;
}

.list .selected {
    background: #434446;
}

/* properties */
.props-body {
    display: flex;
    align-items: flex-start;
    padding-top: 2px;
}

table {
    width: 266px;
    table-layout: fixed;
    border-collapse: collapse;
}

th {
    height: 24px;
    padding: 0;
    border-right: 1px solid #4a4b4d;
    border-bottom: 1px solid #1f2022;
    background: #38393a;
    font-weight: normal;
}

.c-name { width: 101px; }
.c-value { width: 124px; }
.c-add { width: 41px; }

td {
    height: 25px;
    padding: 0;
    text-align: center;
}

.section td {
    padding-left: 8px;
    background: #38393a;
    text-align: left;
}

.section td::before {
    content: "";
    display: inline-block;
    margin-right: 7px;
    border: 3px solid transparent;
    border-top-color: #a0a0a0;
    border-bottom: 0;
    vertical-align: middle;
}

.name {
    padding-left: 15px;
    text-align: left;
    white-space: nowrap;
}

.key {
    color: #2287f2;
}

.val {
    display: flex;
    width: 123px;
    height: 21px;
    padding: 0 3px;
    border: 1px solid #444547;
}

.val svg {
    flex: none;
    width: 10px;
    height: 12px;
    margin: 2px 1px;
}

.val input {
    flex: 1;
    min-width: 0;
    height: 19px;
}

input[type="radio"] {
    width: 8px;
    height: 8px;
    border: 1px solid #58595b;
    border-radius: 50%;
    background: #414244;
    vertical-align: middle;
}

.props .scroll {
    height: 150px;
    padding: 12px 4px;
    overflow: hidden;
}

/* 3d view */
.view {
    position: relative;
    flex: 1;
    min-width: 0;
    background: #000;
    overflow: hidden;
}

.scene {
    display: block;
    width: 100%;
    height: 100%;
}

.axis, .dimline {
    fill: none;
    stroke: #f00000;
    stroke-width: 4;
    shape-rendering: crispEdges;
}

.axis.dim { stroke: #780000; }
.dimline { stroke: #007c0c; }
.col { fill: #7b00f5; }
.col.shade { fill: #4b0099; }
.stone { fill: #8a8a8a; }
.stone-light { fill: #bdbdbd; }
.sky { fill: #2f98f2; }
.cyan { fill: #30f4f4; }
.teal { fill: #28b6c0; }
.wall { fill: #7d7d7d; }
.beam { fill: #27c127; }
.beam-deep { fill: #004a00; }

.wall-edge, .beam-line, .brace, .rim, .edge, .yellow, .pink, .post-thin {
    fill: none;
    stroke: #636363;
    stroke-width: 4;
}

.beam-line { stroke: #189018; stroke-width: 3; }
.brace { stroke: #1e961e; stroke-width: 11; }
.brace.wide { stroke-width: 18; }
.deck { fill: #7b7b7b; }
.under { fill: #505050; }
.rim { stroke: #999; stroke-width: 9; }
.edge { stroke-width: 6; }
.yellow { stroke: #fff02a; stroke-width: 6; }
.pink { stroke: #ff30ff; stroke-width: 4; }
.pink.thick { stroke-width: 6; }
.post-thin { stroke: #7634b8; }

.bubbles {
    color: #007c0c;
    shape-rendering: crispEdges;
}

.labels {
    fill: #fff;
    font: 17px "Noto Sans CJK SC", sans-serif;
}

.fold {
    position: absolute;
    left: 0;
    top: 381px;
    width: 16px;
    height: 62px;
}

.fold svg {
    display: block;
}

.face { fill: #505153; }

.chev {
    fill: none;
    stroke: #a8a8a8;
}

/* annotation */
.mark {
    position: absolute;
    left: 0;
    top: 0;
    width: 1241px;
    height: 747px;
    fill: #ff2314;
    pointer-events: none;
}
```
